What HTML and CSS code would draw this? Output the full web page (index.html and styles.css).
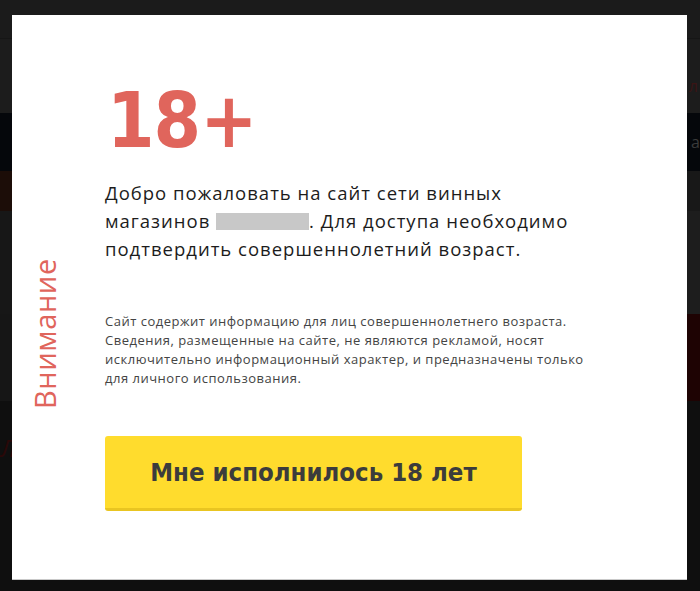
FILE: index.html
```html
<!DOCTYPE html>
<html lang="ru">
<head>
<meta charset="utf-8">
<title>18+</title>
<link rel="stylesheet" href="styles.css">
</head>
<body>
<div class="page">
  <div class="bg-top"></div>
  <div class="bg-band"><span class="bg-glyph-r">л</span></div>
  <div class="bg-navy"><span class="bg-glyph-a">а</span></div>
  <div class="bg-mid"></div>
  <div class="bg-gray"></div>
  <div class="bg-red"></div>
  <div class="bg-dark"><span class="bg-glyph-l">Л</span></div>
</div>
<div class="modal">
  <div class="side"><span class="side-label">Внимание</span></div>
  <div class="content">
    <div class="age">18+</div>
    <p class="lead">Добро пожаловать на сайт сети винных<br>магазинов <span class="redact"></span>. Для доступа необходимо<br>подтвердить совершеннолетний возраст.</p>
    <p class="note">Сайт содержит информацию для лиц совершеннолетнего возраста.<br>Сведения, размещенные на сайте, не являются рекламой, носят<br>исключительно информационный характер, и предназначены только<br>для личного использования.</p>
    <button class="confirm" type="button">Мне исполнилось 18 лет</button>
  </div>
</div>
</body>
</html>
```
FILE: styles.css
```css
html, body {
  margin: 0;
  padding: 0;
}
body {
  width: 700px;
  height: 591px;
  overflow: hidden;
  background: #0e0e0e;
  font-family: "Open Sans", "Liberation Sans", sans-serif;
}
.page {
  display: flex;
  flex-direction: column;
  height: 591px;
}
.bg-top { height: 38px; background: #1b1b1b; border-bottom: 1px solid #161616; }
.bg-band { height: 74px; background: #1c1c1c; position: relative; }
.bg-navy { height: 58px; background: #05070b; position: relative; }
.bg-mid { height: 40px; background: linear-gradient(90deg, #1c0d08 0, #1c0d08 12px, #181818 12px); }
.bg-gray { height: 103px; background: linear-gradient(90deg, #171717 0, #171717 12px, #1d1d1d 12px); }
.bg-red { height: 87px; background: linear-gradient(90deg, #161616 0, #161616 680px, #1e0303 680px); }
.bg-dark { flex: 1; background: #0f0f0f; position: relative; }
.bg-glyph-r { position: absolute; right: 2px; top: 36px; color: #3a1414; font-size: 16px; }
.bg-glyph-a { position: absolute; right: 0; top: 18px; color: #3a3a3a; font-size: 16px; }
.bg-glyph-l { position: absolute; left: 0; top: 30px; color: #2a0808; font-size: 24px; font-style: italic; }

.modal {
  position: absolute;
  left: 12px;
  top: 15px;
  width: 675px;
  height: 564px;
  background: #fff;
  border-bottom: 1px solid #c9c9c9;
  display: flex;
}
.side {
  width: 93px;
  flex: none;
  display: flex;
  justify-content: flex-start;
  align-items: flex-start;
  padding-top: 243px;
  box-sizing: border-box;
}
.side-label {
  writing-mode: vertical-rl;
  transform: rotate(180deg);
  color: #e0655c;
  font-family: "Open Sans", sans-serif;
  font-size: 29px;
  line-height: 1;
  height: 160px;
  margin-left: 18px;
  text-align: right;
  letter-spacing: 0.6px;
}
.content {
  flex: 1;
  padding-top: 66px;
}
.age {
  color: #e0655c;
  font-family: "DejaVu Sans Condensed", "DejaVu Sans", sans-serif;
  font-weight: bold;
  font-size: 76px;
  line-height: 80px;
  letter-spacing: -1px;
  margin-left: 2px;
}
.lead {
  margin: 18px 0 0;
  color: #1c1c1c;
  font-size: 18.5px;
  line-height: 28px;
  letter-spacing: 1px;
}
.redact {
  display: inline-block;
  width: 93px;
  height: 17px;
  background: #c8c8c8;
  vertical-align: -2px;
}
.note {
  margin: 49px 0 0;
  color: #444;
  font-size: 13px;
  line-height: 19px;
  letter-spacing: 0.5px;
}
.confirm {
  display: block;
  margin-top: 48px;
  width: 417px;
  height: 75px;
  border: 0;
  border-bottom: 3px solid #e9c521;
  border-radius: 3px;
  background: #ffdc2d;
  color: #3c3c3c;
  font-family: "DejaVu Sans Condensed", sans-serif;
  font-weight: bold;
  font-size: 25.5px;
  padding: 0;
  cursor: pointer;
}
```
